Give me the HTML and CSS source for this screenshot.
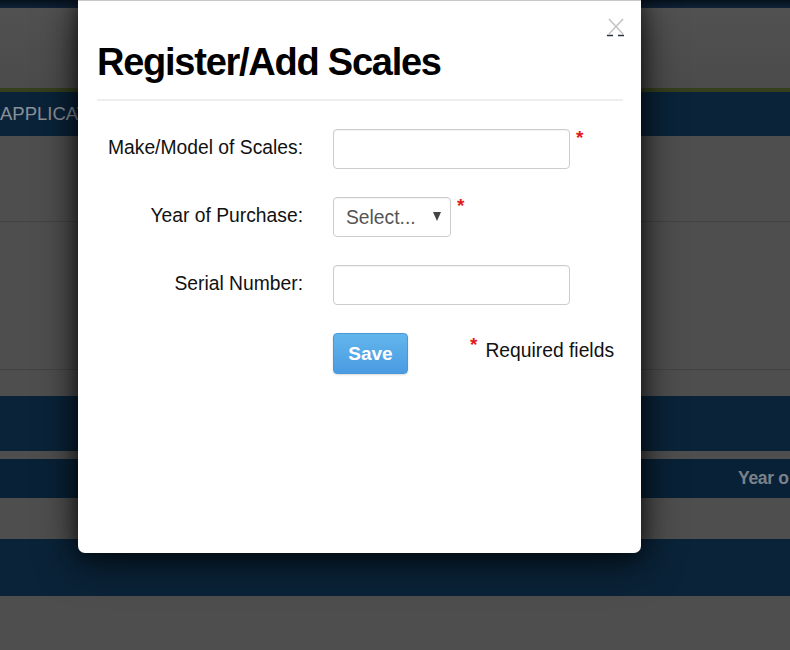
FILE: index.html
```html
<!DOCTYPE html>
<html>
<head>
<meta charset="utf-8">
<link rel="stylesheet" href="styles.css">
</head>
<body>
<div class="page">
  <div class="band topbar"></div>
  <div class="band gray h80"></div>
  <div class="band olive"></div>
  <div class="band navy nav"><span class="navtext">APPLICATIONS</span></div>
  <div class="band gray h86 line-bottom"></div>
  <div class="band gray h147 line-bottom"></div>
  <div class="band gray h27"></div>
  <div class="band navy h55"></div>
  <div class="band gray h8"></div>
  <div class="band navy h39 thead"><span class="thtext">Year o</span></div>
  <div class="band gray h41"></div>
  <div class="band navy h57"></div>
  <div class="band gray rest"></div>
</div>

<div class="modal">
  <div class="close" aria-label="close">
    <svg width="18" height="19" viewBox="0 0 18 19">
      <path d="M2 1 L16 16 M16 1 L2 16" stroke="#c4c4c4" stroke-width="1.6" fill="none"/>
      <path d="M0 17.5 H6 M11 17.5 H17" stroke="#2a3440" stroke-width="1.6"/>
    </svg>
  </div>
  <h1 class="title">Register/Add Scales</h1>
  <div class="rule"></div>
  <div class="form">
    <label class="label">Make/Model of Scales:</label>
    <div class="field"><div class="input wide"></div><span class="req">*</span></div>

    <label class="label">Year of Purchase:</label>
    <div class="field"><div class="input select"><span class="sel-text">Select...</span><span class="arrow"></span></div><span class="req">*</span></div>

    <label class="label">Serial Number:</label>
    <div class="field"><div class="input wide"></div></div>

    <div class="label"></div>
    <div class="field actions">
      <button class="save">Save</button>
      <span class="note"><span class="req small">*</span> Required fields</span>
    </div>
  </div>
</div>
</body>
</html>
```

FILE: styles.css
```css
* { box-sizing: border-box; }
html, body { margin: 0; padding: 0; }
body {
  width: 790px;
  height: 650px;
  overflow: hidden;
  background: #4e4e4e;
  font-family: "Liberation Sans", Arial, sans-serif;
  position: relative;
}
.page { display: flex; flex-direction: column; width: 790px; height: 650px; }
.band { width: 100%; flex: none; }
.topbar { height: 8px; background: linear-gradient(#07111e, #0f2236); }
.gray { background: #4e4e4e; }
.h80 { height: 80px; background: linear-gradient(#515151, #4b4b4b); }
.olive { height: 4px; background: #343f1e; }
.navy { background: #0a2339; }
.nav { height: 44px; display: flex; align-items: center; overflow: hidden; }
.navtext { color: #8a9098; font-size: 18.5px; margin-left: 0; white-space: nowrap; }
.h86 { height: 86px; }
.h147 { height: 148px; }
.line-bottom { border-bottom: 1px solid #434343; }
.h27 { height: 26px; }
.h55 { height: 55px; background: #0a2338; }
.h8 { height: 8px; }
.h39 { height: 39px; }
.thead { display: flex; align-items: center; justify-content: flex-start; overflow: hidden; background: #092136; }
.thtext { color: #7a818a; font-weight: bold; font-size: 17.5px; margin-left: 738px; white-space: nowrap; letter-spacing: -0.3px; }
.h41 { height: 41px; }
.h57 { height: 57px; background: #0a2338; }
.rest { flex: 1; background: #4e4e4e; }

.modal {
  position: absolute;
  left: 78px;
  top: 0;
  width: 563px;
  height: 553px;
  background: #fff;
  border-top: 1px solid #c9c9c9;
  border-radius: 0 0 7px 7px;
  box-shadow: 0 8px 40px rgba(0, 0, 0, 0.7), 0 0 18px rgba(0, 0, 0, 0.5);
  padding: 0 18px 0 19px;
}
.close {
  position: absolute;
  right: 16px;
  top: 17px;
  width: 18px;
  height: 19px;
}
.close svg { display: block; }
.title {
  margin: 0;
  padding-top: 40px;
  font-size: 38px;
  line-height: 43px;
  font-weight: bold;
  color: #000;
  letter-spacing: -1.25px;
}
.rule { height: 2px; background: #eeeeee; margin-top: 15px; }
.form {
  display: grid;
  grid-template-columns: 206px 1fr;
  column-gap: 30px;
  row-gap: 28px;
  margin-top: 28px;
  align-items: center;
}
.label {
  text-align: right;
  font-size: 19.3px;
  color: #111;
  line-height: 22px;
  margin-top: -2px;
}
.field { display: flex; align-items: flex-start; }
.input {
  height: 40px;
  border: 1px solid #cccccc;
  border-radius: 4px;
  background: #fff;
  box-shadow: inset 0 1px 1px rgba(0,0,0,0.05);
}
.wide { width: 237px; }
.select {
  width: 118px;
  display: flex;
  align-items: center;
  padding: 2px 9px 0 12px;
  justify-content: space-between;
}
.sel-text { font-size: 19.3px; color: #555; }
.arrow {
  width: 0; height: 0;
  border-left: 4.5px solid transparent;
  border-right: 4.5px solid transparent;
  border-top: 9px solid #444;
  margin-top: -3px;
}
.req {
  color: #e31b1b;
  font-weight: bold;
  font-size: 19px;
  line-height: 14px;
  margin-left: 6px;
  margin-top: 2px;
}
.actions { align-items: center; }
.save {
  width: 75px;
  height: 41px;
  border: 1px solid #4a98d8;
  border-radius: 4px;
  background: linear-gradient(#63b6ec, #4a9be2);
  color: #fff;
  font-family: "Liberation Sans", Arial, sans-serif;
  font-weight: bold;
  font-size: 19px;
  padding: 0;
  box-shadow: 0 1px 2px rgba(0,0,0,0.15);
}
.note {
  margin-left: 62px;
  font-size: 19.3px;
  color: #111;
  margin-top: -5px;
  display: flex;
  align-items: flex-start;
}
.req.small { margin: -2px 8px 0 0; line-height: 14px; }
```
